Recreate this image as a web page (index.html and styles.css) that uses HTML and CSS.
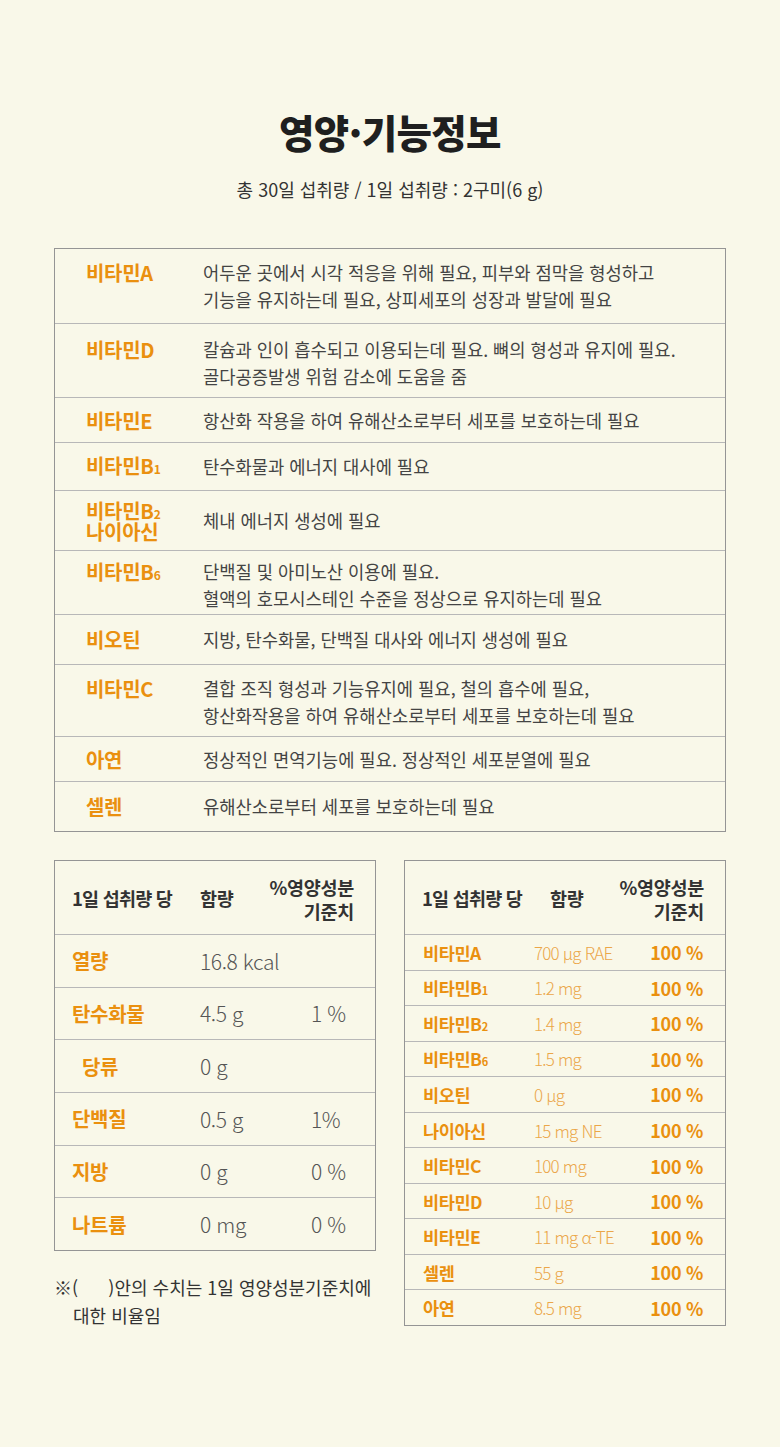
FILE: index.html
```html
<!DOCTYPE html>
<html lang="ko">
<head>
<meta charset="utf-8">
<title>영양·기능정보</title>
<link rel="stylesheet" href="styles.css">
</head>
<body>
<main class="page">
  <h1 class="title">영양·기능정보</h1>
  <p class="subtitle">총 30일 섭취량 / 1일 섭취량 : 2구미(6 g)</p>

  <section class="func">
    <div class="func-row two r74">
      <div class="func-name">비타민A</div>
      <div class="func-desc">어두운 곳에서 시각 적응을 위해 필요, 피부와 점막을 형성하고<br>기능을 유지하는데 필요, 상피세포의 성장과 발달에 필요</div>
    </div>
    <div class="func-row two r74 pt-12">
      <div class="func-name">비타민D</div>
      <div class="func-desc">칼슘과 인이 흡수되고 이용되는데 필요. 뼈의 형성과 유지에 필요.<br>골다공증발생 위험 감소에 도움을 줌</div>
    </div>
    <div class="func-row r45">
      <div class="func-name">비타민E</div>
      <div class="func-desc">항산화 작용을 하여 유해산소로부터 세포를 보호하는데 필요</div>
    </div>
    <div class="func-row r48">
      <div class="func-name">비타민B<span class="sub">1</span></div>
      <div class="func-desc">탄수화물과 에너지 대사에 필요</div>
    </div>
    <div class="func-row r60">
      <div class="func-name stack"><span class="line">비타민B<span class="sub">2</span></span><span class="line">나이아신</span></div>
      <div class="func-desc">체내 에너지 생성에 필요</div>
    </div>
    <div class="func-row two r64 pt-7">
      <div class="func-name">비타민B<span class="sub">6</span></div>
      <div class="func-desc">단백질 및 아미노산 이용에 필요.<br>혈액의 호모시스테인 수준을 정상으로 유지하는데 필요</div>
    </div>
    <div class="func-row r50">
      <div class="func-name">비오틴</div>
      <div class="func-desc">지방, 탄수화물, 단백질 대사와 에너지 생성에 필요</div>
    </div>
    <div class="func-row two r72">
      <div class="func-name">비타민C</div>
      <div class="func-desc">결합 조직 형성과 기능유지에 필요, 철의 흡수에 필요,<br>항산화작용을 하여 유해산소로부터 세포를 보호하는데 필요</div>
    </div>
    <div class="func-row r45">
      <div class="func-name">아연</div>
      <div class="func-desc">정상적인 면역기능에 필요. 정상적인 세포분열에 필요</div>
    </div>
    <div class="func-row r50">
      <div class="func-name">셀렌</div>
      <div class="func-desc">유해산소로부터 세포를 보호하는데 필요</div>
    </div>
  </section>

  <div class="bottom">
    <div class="left-col">
      <section class="nut nut-left">
        <div class="nut-head">
          <div class="h-name">1일 섭취량 당</div>
          <div class="h-amt">함량</div>
          <div class="h-pct">%영양성분<br>기준치</div>
        </div>
        <div class="nut-row">
          <div class="n-name">열량</div>
          <div class="n-amt">16.8 kcal</div>
          <div class="n-pct"></div>
        </div>
        <div class="nut-row">
          <div class="n-name">탄수화물</div>
          <div class="n-amt">4.5 g</div>
          <div class="n-pct">1 %</div>
        </div>
        <div class="nut-row">
          <div class="n-name indent">당류</div>
          <div class="n-amt">0 g</div>
          <div class="n-pct"></div>
        </div>
        <div class="nut-row">
          <div class="n-name">단백질</div>
          <div class="n-amt">0.5 g</div>
          <div class="n-pct">1%</div>
        </div>
        <div class="nut-row">
          <div class="n-name">지방</div>
          <div class="n-amt">0 g</div>
          <div class="n-pct">0 %</div>
        </div>
        <div class="nut-row">
          <div class="n-name">나트륨</div>
          <div class="n-amt">0 mg</div>
          <div class="n-pct">0 %</div>
        </div>
      </section>
      <p class="note">※(&nbsp;&nbsp;&nbsp;&nbsp;&nbsp;&nbsp;)안의 수치는 1일 영양성분기준치에<br>대한 비율임</p>
    </div>

    <section class="nut nut-right">
      <div class="nut-head">
        <div class="h-name">1일 섭취량 당</div>
        <div class="h-amt">함량</div>
        <div class="h-pct">%영양성분<br>기준치</div>
      </div>
      <div class="vit-row"><div class="v-name">비타민A</div><div class="v-amt">700 μg RAE</div><div class="v-pct">100 %</div></div>
      <div class="vit-row"><div class="v-name">비타민B<span class="sub">1</span></div><div class="v-amt">1.2 mg</div><div class="v-pct">100 %</div></div>
      <div class="vit-row"><div class="v-name">비타민B<span class="sub">2</span></div><div class="v-amt">1.4 mg</div><div class="v-pct">100 %</div></div>
      <div class="vit-row"><div class="v-name">비타민B<span class="sub">6</span></div><div class="v-amt">1.5 mg</div><div class="v-pct">100 %</div></div>
      <div class="vit-row"><div class="v-name">비오틴</div><div class="v-amt">0 μg</div><div class="v-pct">100 %</div></div>
      <div class="vit-row"><div class="v-name">나이아신</div><div class="v-amt">15 mg NE</div><div class="v-pct">100 %</div></div>
      <div class="vit-row"><div class="v-name">비타민C</div><div class="v-amt">100 mg</div><div class="v-pct">100 %</div></div>
      <div class="vit-row"><div class="v-name">비타민D</div><div class="v-amt">10 μg</div><div class="v-pct">100 %</div></div>
      <div class="vit-row"><div class="v-name">비타민E</div><div class="v-amt">11 mg α-TE</div><div class="v-pct">100 %</div></div>
      <div class="vit-row"><div class="v-name">셀렌</div><div class="v-amt">55 g</div><div class="v-pct">100 %</div></div>
      <div class="vit-row"><div class="v-name">아연</div><div class="v-amt">8.5 mg</div><div class="v-pct">100 %</div></div>
    </section>
  </div>
</main>
</body>
</html>
```

FILE: styles.css
```css
* {
  box-sizing: border-box;
}

html, body {
  margin: 0;
  padding: 0;
  background: #f9f8e9;
}

body {
  font-family: "Noto Sans CJK KR", "Noto Sans", sans-serif;
  color: #333;
}

.page {
  width: 780px;
  min-height: 1447px;
  padding: 108px 54px 0 54px;
}

.title {
  margin: 0;
  text-align: center;
  font-size: 38.5px;
  line-height: 46px;
  font-weight: 900;
  letter-spacing: -0.6px;
  color: #1f1f1f;
}

.subtitle {
  margin: 23px 0 0;
  text-align: center;
  font-size: 18px;
  line-height: 24px;
  color: #333;
  letter-spacing: 0;
}

/* functional info table */
.func {
  margin-top: 47px;
  border: 1px solid #959595;
  width: 672px;
}

.func-row {
  display: grid;
  grid-template-columns: 148px 1fr;
  align-items: center;
  border-top: 1px solid #b8b8b8;
}

.func-row:first-child {
  border-top: none;
}

.func-row.two {
  align-items: start;
  padding-top: 10px;
}

.func-row.pt-12 {
  padding-top: 12px;
}

.func-row.pt-7 {
  padding-top: 7px;
}

.r45 { height: 45px; }
.r48 { height: 48px; }
.r50 { height: 50px; }
.r60 { height: 60px; }
.r64 { height: 64px; }
.r72 { height: 72px; }
.r74 { height: 74px; }

.func-name {
  padding-left: 31px;
  font-size: 20px;
  line-height: 27px;
  font-weight: 700;
  color: #ea900f;
  letter-spacing: -0.3px;
}

.func-name.stack {
  display: flex;
  flex-direction: column;
  line-height: 21px;
}

.func-name .line {
  display: block;
  height: 21px;
}

.sub {
  font-size: 12px;
  font-weight: 700;
  letter-spacing: 0;
}

.func-desc {
  font-size: 17.7px;
  line-height: 27px;
  color: #444;
  letter-spacing: 0;
}

/* bottom tables */
.bottom {
  margin-top: 28px;
  display: flex;
  justify-content: space-between;
  align-items: flex-start;
}

.left-col {
  width: 322px;
}

.nut {
  width: 322px;
  border: 1px solid #959595;
}

.nut-head {
  height: 73px;
  display: grid;
  grid-template-columns: 128px 1fr auto;
  align-items: center;
  padding: 0 21px 0 17px;
  font-size: 18.5px;
  font-weight: 700;
  color: #333;
}

.h-name {
  letter-spacing: -0.8px;
  white-space: nowrap;
}

.h-amt {
  letter-spacing: -0.3px;
}

.h-pct {
  text-align: right;
  line-height: 24px;
  letter-spacing: -0.3px;
  padding-top: 2px;
}

.nut-row {
  height: 52.67px;
  display: grid;
  grid-template-columns: 145px 111px 1fr;
  align-items: center;
  border-top: 1px solid #b8b8b8;
}

.n-name {
  padding-left: 17px;
  font-size: 20px;
  font-weight: 700;
  color: #ea900f;
  letter-spacing: -0.3px;
}

.n-name.indent {
  padding-left: 27px;
}

.n-amt,
.n-pct {
  font-size: 21px;
  font-weight: 300;
  color: #555;
  letter-spacing: -0.4px;
}

.note {
  margin: 22px 0 0;
  font-size: 18px;
  line-height: 28px;
  color: #333;
  letter-spacing: 0;
  padding-left: 19px;
  text-indent: -19px;
  white-space: nowrap;
}

.vit-row {
  height: 35.55px;
  display: grid;
  grid-template-columns: 129px 1fr auto;
  align-items: center;
  border-top: 1px solid #b8b8b8;
  padding-right: 22px;
}

.v-name {
  padding-left: 18px;
  font-size: 17.5px;
  font-weight: 700;
  color: #ea900f;
  letter-spacing: -0.4px;
}

.v-name .sub {
  font-size: 11px;
}

.v-amt {
  font-size: 17px;
  font-weight: 300;
  color: #eba648;
  letter-spacing: -0.8px;
}

.v-pct {
  font-size: 18px;
  font-weight: 700;
  color: #ea900f;
  letter-spacing: -0.3px;
}
```
